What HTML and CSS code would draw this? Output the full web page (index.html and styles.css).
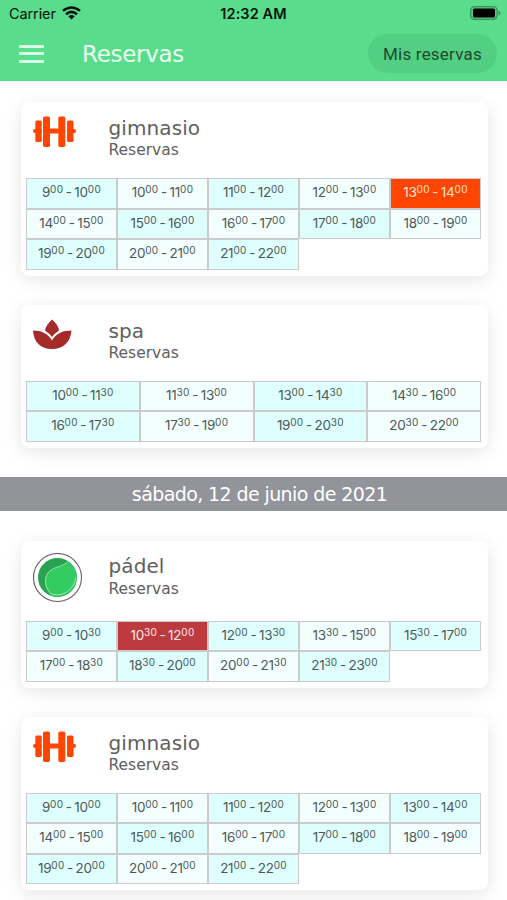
FILE: index.html
```html
<!DOCTYPE html>
<html lang="es">
<head>
<meta charset="utf-8">
<title>Reservas</title>
<link rel="stylesheet" href="styles.css">
</head>
<body>
<header class="header">
  <div class="status">
    <div class="carrier"><span>Carrier</span>
      <svg class="wifi" width="19" height="14" viewBox="0 0 19 14"><g fill="none" stroke="#07130b" stroke-width="2.5"><path d="M1 4.900Q9.500-2 18 4.900"/><path d="M4 8.200Q9.500 3.600 15 8.200"/></g><path fill="#07130b" d="M6.300 10.300Q9.500 7.700 12.700 10.300L9.500 13.600Z"/></svg>
    </div>
    <span class="clock">12:32 AM</span>
    <svg class="battery" width="31" height="14" viewBox="0 0 31 14"><rect x=".6" y=".6" width="26.500" height="12.800" rx="4" fill="#54c77f" stroke="#35935a" stroke-width="1.200"/><rect x="3" y="2.500" width="22" height="9" rx="1.500"/><path d="M28.500 4.500q2 .6 2 2.500t-2 2.500z" fill="#35935a"/></svg>
  </div>
  <nav class="nav">
    <div class="menu"><i></i><i></i><i></i></div>
    <h1 class="title">Reservas</h1>
    <button class="mine">Mis reservas</button>
  </nav>
</header>
<main>
<section class="card">
  <div class="head">
    <svg class="icon" width="50" height="50" viewBox="0 0 50 50"><g fill="#ff4500"><rect x="0" y="13" width="43" height="4" rx="2"/><rect x="2.300" y="4.500" width="6.500" height="21.500" rx="1.500"/><rect x="34" y="4.500" width="6.500" height="21.500" rx="1.500"/></g><path fill="#fff" d="M8.800 10h2v10h-2zM32 10h2v10h-2z"/><g fill="#ff4500"><rect x="10" y=".5" width="7" height="30.500" rx="1.800"/><rect x="25.300" y=".5" width="7" height="30.500" rx="1.800"/><path d="M16.500 12.500h9v5h-9z"/></g></svg>
    <div class="names"><h2>gimnasio</h2><p>Reservas</p></div>
  </div>
  <div class="slots">
    <div class="alt">9<sup>00</sup> - 10<sup>00</sup></div><div>10<sup>00</sup> - 11<sup>00</sup></div><div class="alt">11<sup>00</sup> - 12<sup>00</sup></div><div>12<sup>00</sup> - 13<sup>00</sup></div><div class="picked">13<sup>00</sup> - 14<sup>00</sup></div>
    <div>14<sup>00</sup> - 15<sup>00</sup></div><div class="alt">15<sup>00</sup> - 16<sup>00</sup></div><div>16<sup>00</sup> - 17<sup>00</sup></div><div class="alt">17<sup>00</sup> - 18<sup>00</sup></div><div>18<sup>00</sup> - 19<sup>00</sup></div>
    <div class="alt">19<sup>00</sup> - 20<sup>00</sup></div><div>20<sup>00</sup> - 21<sup>00</sup></div><div class="alt">21<sup>00</sup> - 22<sup>00</sup></div>
  </div>
</section>
<section class="card">
  <div class="head">
    <svg class="icon" width="50" height="50" viewBox="0 0 50 50"><path fill="#a52a2a" d="M19 .500Q13 6 12 11.500Q16.500 14.500 19 18Q21.500 14.500 26 11.500Q25.500 6 19 .500ZM0 11.500C.7 23 7.500 30 19 30S37.500 23 38.500 11.500C29.500 11.500 23 14.500 19 21.500C15 14.500 8.500 11.500 0 11.500Z"/></svg>
    <div class="names"><h2>spa</h2><p>Reservas</p></div>
  </div>
  <div class="slots four">
    <div class="alt">10<sup>00</sup> - 11<sup>30</sup></div><div>11<sup>30</sup> - 13<sup>00</sup></div><div class="alt">13<sup>00</sup> - 14<sup>30</sup></div><div>14<sup>30</sup> - 16<sup>00</sup></div>
    <div class="alt">16<sup>00</sup> - 17<sup>30</sup></div><div>17<sup>30</sup> - 19<sup>00</sup></div><div class="alt">19<sup>00</sup> - 20<sup>30</sup></div><div>20<sup>30</sup> - 22<sup>00</sup></div>
  </div>
</section>
<div class="day"><span>sábado, 12 de junio de 2021</span></div>
<section class="card tall">
  <div class="head">
    <svg class="icon" width="50" height="50" viewBox="0 0 50 50"><circle cx="24.500" cy="24.500" r="24" fill="#fff" stroke="#655d60" stroke-width="1.100"/><circle cx="24.500" cy="24.500" r="19.500" fill="#29a352"/><path d="M35 8.200C31 13.500 24 13 18 17C9 23 11 37.500 19.500 43.300A19.500 19.500 0 0 0 35 8.200Z" fill="#33cc60"/><path d="M35 8.200C31 13.500 24 13 18 17C9 23 12 38 20 41.500C32 43.500 41 36 43 24" fill="none" stroke="#a5e5b5" stroke-width=".9"/></svg>
    <div class="names"><h2>pádel</h2><p>Reservas</p></div>
  </div>
  <div class="slots">
    <div class="alt">9<sup>00</sup> - 10<sup>30</sup></div><div class="taken">10<sup>30</sup> - 12<sup>00</sup></div><div class="alt">12<sup>00</sup> - 13<sup>30</sup></div><div>13<sup>30</sup> - 15<sup>00</sup></div><div class="alt">15<sup>30</sup> - 17<sup>00</sup></div>
    <div>17<sup>00</sup> - 18<sup>30</sup></div><div class="alt">18<sup>30</sup> - 20<sup>00</sup></div><div>20<sup>00</sup> - 21<sup>30</sup></div><div class="alt">21<sup>30</sup> - 23<sup>00</sup></div>
  </div>
</section>
<section class="card">
  <div class="head">
    <svg class="icon" width="50" height="50" viewBox="0 0 50 50"><g fill="#ff4500"><rect x="0" y="13" width="43" height="4" rx="2"/><rect x="2.300" y="4.500" width="6.500" height="21.500" rx="1.500"/><rect x="34" y="4.500" width="6.500" height="21.500" rx="1.500"/></g><path fill="#fff" d="M8.800 10h2v10h-2zM32 10h2v10h-2z"/><g fill="#ff4500"><rect x="10" y=".5" width="7" height="30.500" rx="1.800"/><rect x="25.300" y=".5" width="7" height="30.500" rx="1.800"/><path d="M16.500 12.500h9v5h-9z"/></g></svg>
    <div class="names"><h2>gimnasio</h2><p>Reservas</p></div>
  </div>
  <div class="slots">
    <div class="alt">9<sup>00</sup> - 10<sup>00</sup></div><div>10<sup>00</sup> - 11<sup>00</sup></div><div class="alt">11<sup>00</sup> - 12<sup>00</sup></div><div>12<sup>00</sup> - 13<sup>00</sup></div><div class="alt">13<sup>00</sup> - 14<sup>00</sup></div>
    <div>14<sup>00</sup> - 15<sup>00</sup></div><div class="alt">15<sup>00</sup> - 16<sup>00</sup></div><div>16<sup>00</sup> - 17<sup>00</sup></div><div class="alt">17<sup>00</sup> - 18<sup>00</sup></div><div>18<sup>00</sup> - 19<sup>00</sup></div>
    <div class="alt">19<sup>00</sup> - 20<sup>00</sup></div><div>20<sup>00</sup> - 21<sup>00</sup></div><div class="alt">21<sup>00</sup> - 22<sup>00</sup></div>
  </div>
</section>
</main>
</body>
</html>
```
FILE: styles.css
```css
* { box-sizing: border-box; }
body {
  margin: 0;
  height: 900px;
  overflow: hidden;
  background: #fff;
  color: #606060;
  font-family: "DejaVu Sans", sans-serif;
}
h1, h2, p { margin: 0; font-weight: 400; }

.header { height: 81px; background: #59dd8d; }
.status {
  display: grid;
  grid-template-columns: 1fr auto 1fr;
  align-items: center;
  height: 27px;
  padding: 0 6px 0 9px;
  font: 14.500px/27px Inter, sans-serif;
  color: #07130b;
}
.carrier { display: flex; align-items: center; gap: 6px; }
.carrier span { letter-spacing: -.1px; }
.wifi { margin-top: -2px; }
.clock { margin-right: 3px; font-weight: 600; letter-spacing: .1px; }
.battery { justify-self: end; margin-top: -1px; }
.nav { display: flex; align-items: center; height: 54px; padding: 0 10px 0 19px; }
.menu { display: flex; flex-direction: column; gap: 4.500px; width: 25px; margin-top: -1px; }
.menu i { height: 3px; background: #d9fbe6; }
.title { margin-left: 38px; color: #e9fff1; font-size: 23px; letter-spacing: -.3px; line-height: 52px; }
.mine {
  width: 129px;
  height: 39px;
  margin: 0 0 1px auto;
  padding: 0;
  border: 0;
  border-radius: 20px;
  background: #53cf84;
  color: #1c4a2e;
  font: 17px Roboto, sans-serif;
  letter-spacing: .2px;
}

main { display: flow-root; }
.card {
  width: 467px;
  margin: 21px 0 0 20.500px;
  padding: 14px 6px 6px;
  border-radius: 8px;
  background: #fff;
  box-shadow: 0 4px 18px rgba(0, 0, 0, .1);
}
.card + .card { margin-top: 29px; }
.head { display: flex; height: 62px; padding-left: 6px; }
.tall { padding-top: 12px; }
.tall .head { height: 67.500px; }
.icon { flex: none; }
.names { margin-left: 26px; }
.names h2 { font-size: 20px; line-height: 24px; letter-spacing: .1px; }
.names p { font-size: 15.500px; line-height: 21px; }
.tall .names { padding-top: 1px; }
.tall .names p { line-height: 22px; }

.slots { display: grid; grid-template-columns: repeat(5, 91px); grid-auto-rows: 30.500px; margin-left: -.5px; }
.slots.four { grid-template-columns: repeat(4, 113.750px); }
.slots div {
  border: 1px solid #cbcbcb;
  background: #f3ffff;
  color: #4c5858;
  font: 13.500px/26px Inter, sans-serif;
  letter-spacing: -.25px;
  word-spacing: -1px;
  text-align: center;
  white-space: nowrap;
}
.slots .alt { background: #dfffff; }
.slots .picked { background: #ff4500; color: #ffe3d5; }
.slots .taken { background: #bd3a3e; color: #fde8e8; }
.slots sup { position: relative; top: -4px; font-size: 10px; line-height: 0; vertical-align: baseline; letter-spacing: .3px; }

.day { height: 34px; margin-top: 29.500px; background: #93939b; color: #fff; font-size: 19px; line-height: 35px; text-align: center; letter-spacing: -.6px; padding-left: 12px; }
.day + .card { margin-top: 30px; }
```
